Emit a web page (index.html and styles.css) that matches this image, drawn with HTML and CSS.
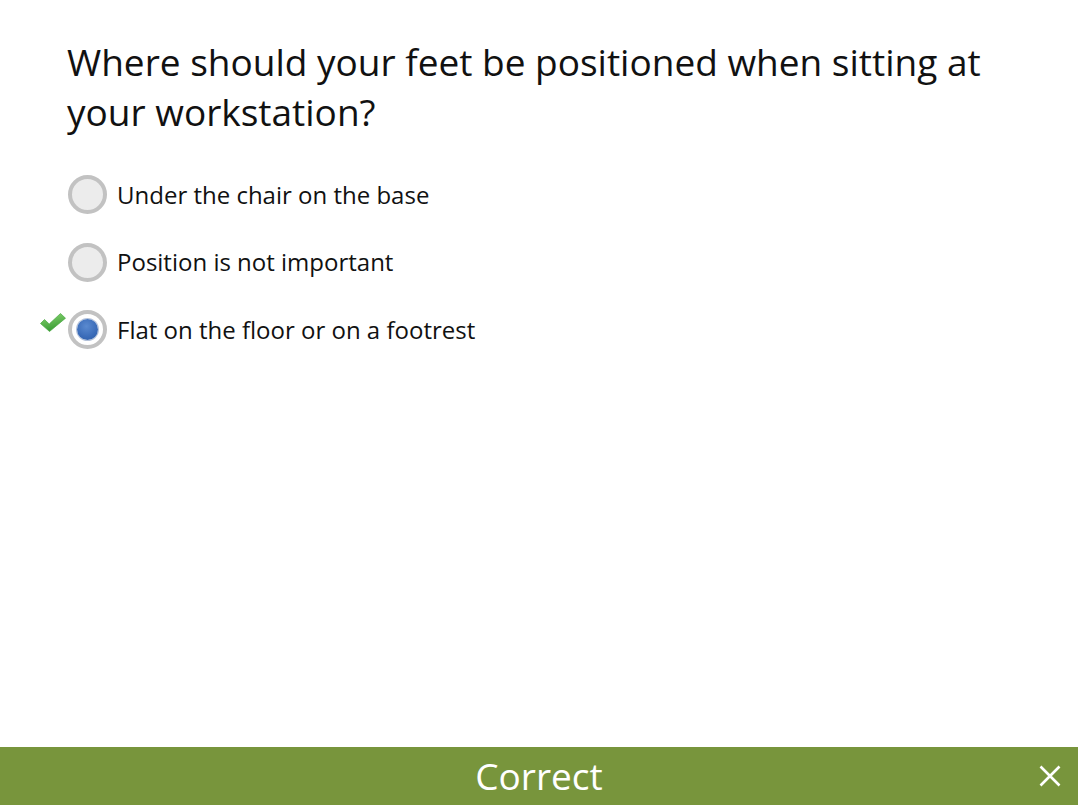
FILE: index.html
```html
<!DOCTYPE html>
<html lang="en">
<head>
<meta charset="utf-8">
<title>Quiz</title>
<link rel="stylesheet" href="styles.css">
</head>
<body>
<div class="page">
  <main class="content">
    <h1 class="question">Where should your feet be positioned when sitting at your workstation?</h1>
    <ul class="options">
      <li class="option">
        <span class="mark"></span>
        <span class="radio"></span>
        <span class="label">Under the chair on the base</span>
      </li>
      <li class="option">
        <span class="mark"></span>
        <span class="radio"></span>
        <span class="label">Position is not important</span>
      </li>
      <li class="option">
        <span class="mark">
          <svg width="26" height="19" viewBox="0 0 26 19">
            <defs>
              <linearGradient id="g" x1="0" y1="0" x2="0.3" y2="1">
                <stop offset="0" stop-color="#8ad672"/>
                <stop offset="1" stop-color="#3a9c35"/>
              </linearGradient>
            </defs>
            <path d="M0.5 10.5 L4.5 6.5 L9.2 11 L20.5 0.5 L25.5 5.2 L9.5 18.5 Z" fill="url(#g)" stroke="#47a841" stroke-width="0.7" stroke-linejoin="round"/>
          </svg>
        </span>
        <span class="radio selected"><span class="dot"></span></span>
        <span class="label">Flat on the floor or on a footrest</span>
      </li>
    </ul>
  </main>
  <footer class="feedback">
    <span class="feedback-text">Correct</span>
    <button class="close" aria-label="Close">
      <svg width="22" height="22" viewBox="0 0 22 22">
        <path d="M1.5 1.5 L20.5 20.5 M20.5 1.5 L1.5 20.5" stroke="#fff" stroke-width="2.6" stroke-linecap="butt"/>
      </svg>
    </button>
  </footer>
</div>
</body>
</html>
```
FILE: styles.css
```css
* { box-sizing: border-box; }
html, body {
  margin: 0;
  padding: 0;
  background: #fff;
}
body {
  font-family: "Open Sans", "Noto Sans", sans-serif;
  color: #111;
}
.page {
  width: 1078px;
  height: 805px;
  display: flex;
  flex-direction: column;
}
.content {
  flex: 1;
  padding: 37px 40px 0 67px;
}
.question {
  margin: 0;
  font-size: 37px;
  font-weight: 400;
  line-height: 50px;
  color: #111;
}
.options {
  list-style: none;
  margin: 38px 0 0 0;
  padding: 0;
  display: flex;
  flex-direction: column;
  gap: 28.5px;
}
.option {
  display: flex;
  align-items: center;
  height: 39px;
  margin-left: -27px;
}
.mark {
  width: 28px;
  height: 39px;
  display: flex;
  align-items: flex-start;
  padding-top: 3px;
  flex: none;
}
.radio {
  width: 39px;
  height: 39px;
  border-radius: 50%;
  border: 4px solid #c2c2c2;
  background: #ececec;
  display: flex;
  align-items: center;
  justify-content: center;
  flex: none;
}
.radio.selected {
  background: #fff;
}
.dot {
  width: 21px;
  height: 21px;
  border-radius: 50%;
  background: radial-gradient(circle at 45% 35%, #5a8ad0 0%, #3a6bb8 60%, #2d5aa2 100%);
  box-shadow: 0 0 0 1px rgba(40, 80, 150, 0.35);
}
.label {
  margin-left: 10px;
  font-size: 24px;
  line-height: 30px;
  color: #111;
}
.feedback {
  height: 58px;
  background: #78953c;
  display: flex;
  align-items: center;
  justify-content: center;
  position: relative;
  flex: none;
}
.feedback-text {
  color: #fff;
  font-size: 37px;
  line-height: 58px;
}
.close {
  position: absolute;
  right: 17px;
  top: 18px;
  width: 22px;
  height: 22px;
  padding: 0;
  border: 0;
  background: transparent;
  display: flex;
}
```
